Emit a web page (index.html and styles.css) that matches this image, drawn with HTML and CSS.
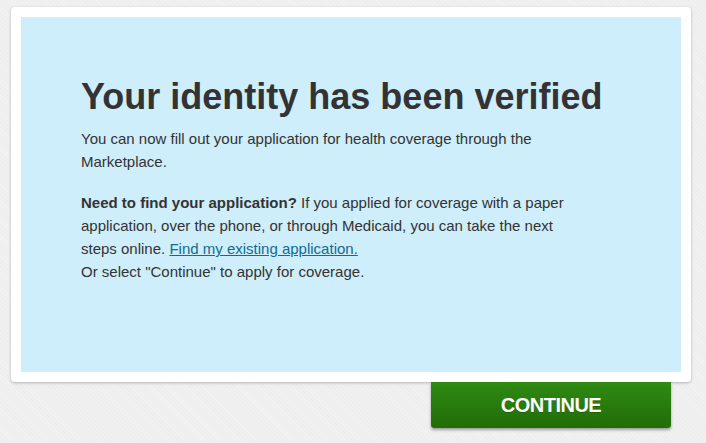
FILE: index.html
```html
<!DOCTYPE html>
<html lang="en">
<head>
    <meta charset="UTF-8">
    <meta name="viewport" content="width=device-width, initial-scale=1.0">
    <title>Identity Verified</title>
    <link rel="stylesheet" href="styles.css">
</head>
<body>
    <div class="card">
        <div class="panel">
            <h1>Your identity has been verified</h1>
            <p>You can now fill out your application for health coverage through the Marketplace.</p>
            <p><strong>Need to find your application?</strong> If you applied for coverage with a paper application, over the phone, or through Medicaid, you can take the next steps online. <a href="#">Find my existing application. </a><br>Or select "Continue" to apply for coverage.</p>
        </div>
    </div>
    <div class="actions">
        <button class="continue-btn">CONTINUE</button>
    </div>
</body>
</html>
```
FILE: styles.css
```css
body {
    margin: 0;
    padding: 7px 15px 0 11px;
    font-family: "Liberation Sans", Arial, sans-serif;
    background-color: #eeeeee;
    background-image: repeating-linear-gradient(45deg, rgba(255, 255, 255, 0.25) 0 1px, transparent 1px 3px);
    color: #333333;
    height: 443px;
    box-sizing: border-box;
    overflow: hidden;
}
.card {
    background-color: #ffffff;
    border-radius: 4px;
    padding: 10px;
    box-shadow: 0 1px 3px rgba(0, 0, 0, 0.25);
}
.panel {
    background-color: #cfeefb;
    height: 355px;
    box-sizing: border-box;
    padding: 58px 60px 0 60px;
}
.panel p {
    max-width: 510px;
}
h1 {
    font-size: 36px;
    font-weight: bold;
    margin: 0 0 8px 0;
    line-height: 44px;
    color: #333333;
}
p {
    font-size: 15px;
    line-height: 23px;
    margin: 0 0 18px 0;
}
a {
    color: #0f6b93;
    text-decoration: underline;
}
.actions {
    display: flex;
    justify-content: flex-end;
    padding-right: 20px;
}
.continue-btn {
    width: 240px;
    height: 46px;
    border: none;
    border-radius: 0 0 3px 3px;
    background: linear-gradient(#2f8a13, #226c08);
    color: #ffffff;
    font-family: "Liberation Sans", Arial, sans-serif;
    font-size: 20px;
    font-weight: bold;
    letter-spacing: -0.5px;
    text-shadow: 0 1px 0 rgba(0, 0, 0, 0.2);
    box-shadow: 0 2px 3px rgba(0, 0, 0, 0.35);
    cursor: pointer;
}
```
